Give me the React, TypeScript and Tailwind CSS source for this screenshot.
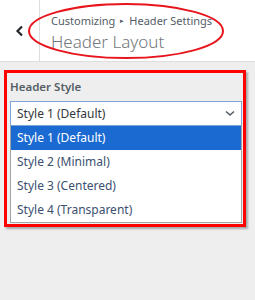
import React from "react"

const options = [
    "Style 1 (Default)",
    "Style 2 (Minimal)",
    "Style 3 (Centered)",
    "Style 4 (Transparent)",
]

const App = () => {
    return (
        <div
            className="relative w-[255px] h-[300px] bg-[#eeeeee] overflow-hidden"
            style={{ fontFamily: "'Noto Sans', 'Open Sans', sans-serif" }}
        >
            {/* header */}
            <div className="flex h-[62px] bg-white border-b border-[#dddddd]">
                <div className="w-[40px] border-r border-[#dddddd] flex items-center justify-center">
                    <svg width="10" height="12" viewBox="0 0 10 12">
                        <path d="M7 1.5 L2.5 6 L7 10.5" stroke="#23282d" strokeWidth="2.2" fill="none" />
                    </svg>
                </div>
                <div className="pl-[11px] pt-[13px]">
                    <div className="text-[11px] leading-[15px] text-[#555d66] flex items-center gap-[5px]">
                        <span>Customizing</span>
                        <span className="text-[7px]">▸</span>
                        <span>Header Settings</span>
                    </div>
                    <div className="text-[17px] leading-[22px] font-light text-[#72777c] mt-[3px]">
                        Header Layout
                    </div>
                </div>
            </div>

            {/* control */}
            <div className="pl-[10px] pt-[17px]">
                <div className="text-[11.5px] leading-[16px] font-semibold text-[#555d66]">
                    Header Style
                </div>
                <div className="mt-[6px] w-[232px] h-[25px] bg-white border border-[#7ea6d6] flex items-center justify-between pl-[6px] pr-[6px]">
                    <span className="text-[12px] text-[#32373c]">Style 1 (Default)</span>
                    <svg width="10" height="7" viewBox="0 0 10 7">
                        <path d="M1 1.5 L5 5 L9 1.5" stroke="#555d66" strokeWidth="1.6" fill="none" />
                    </svg>
                </div>
                <div className="w-[232px] bg-white border border-[#a0a5aa] border-t-0">
                    {options.map((opt, idx) => (
                        <div
                            key={idx}
                            className={
                                idx == 0
                                    ? "h-[24px] flex items-center pl-[6px] text-[12px] bg-[#1a6ad2] text-white"
                                    : "h-[24px] flex items-center pl-[6px] text-[12px] text-[#3c5070]"
                            }
                        >
                            {opt}
                        </div>
                    ))}
                </div>
            </div>

            {/* annotations */}
            <svg className="absolute left-0 top-0" width="255" height="70">
                <ellipse cx="126" cy="31" rx="97" ry="27" stroke="#e8141b" strokeWidth="2" fill="none" />
            </svg>
            <div className="absolute left-[4px] top-[70px] w-[242px] h-[157px] border-[3px] border-[#ff0000] shadow-[2px_2px_2px_rgba(0,0,0,0.3)]" />
        </div>
    )
}

export default App
